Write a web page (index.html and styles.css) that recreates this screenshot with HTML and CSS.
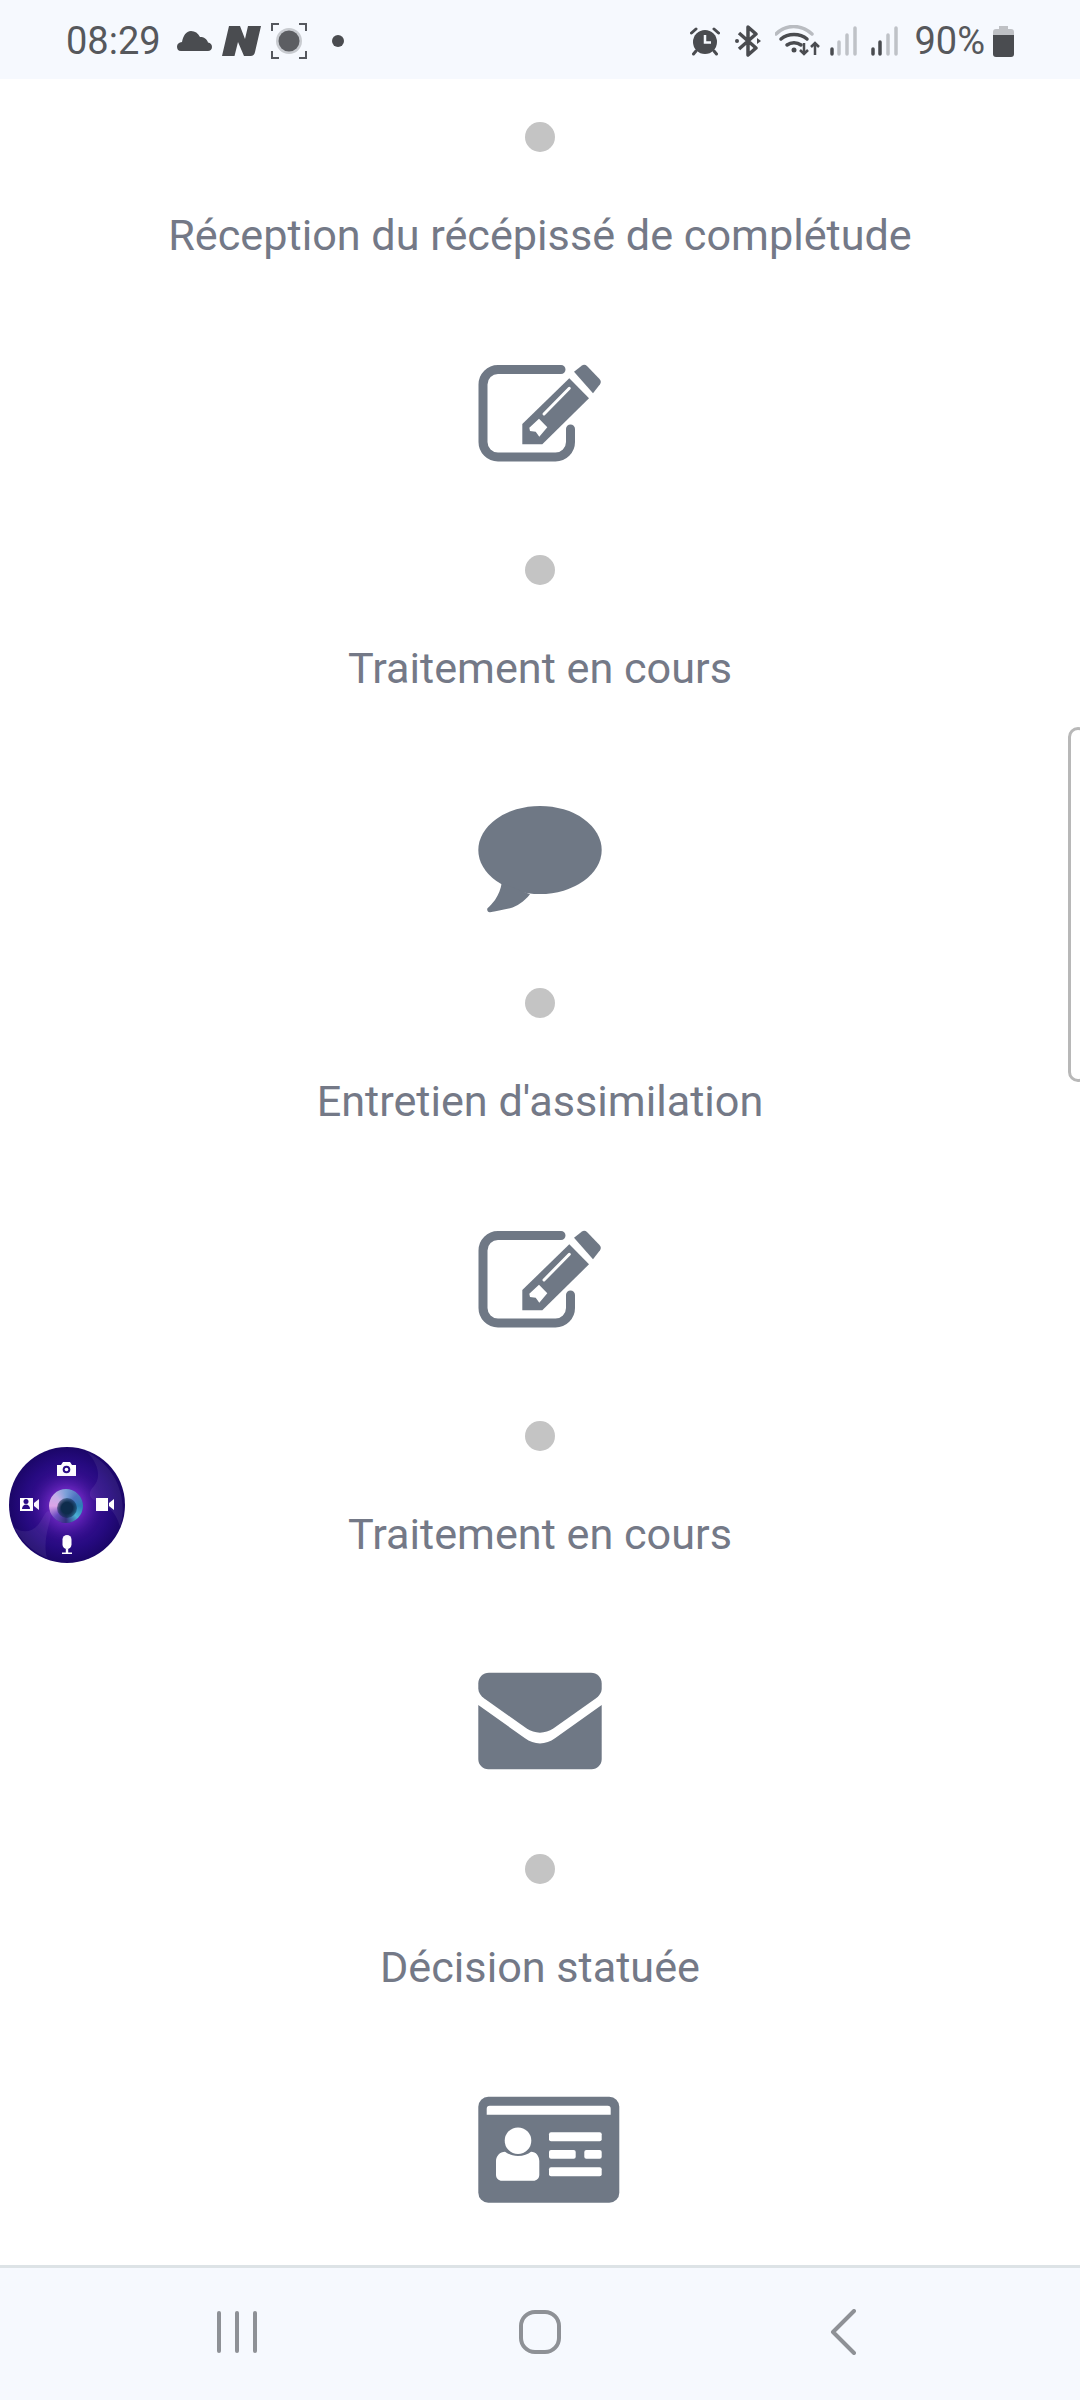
FILE: index.html
```html
<!DOCTYPE html>
<html lang="fr">
<head>
<meta charset="utf-8">
<title>Suivi du dossier</title>
<link rel="stylesheet" href="styles.css">
</head>
<body>
<div class="screen">
  <header class="status">
    <div class="status-group">
      <span class="clock">08:29</span>
      <svg class="gap16" width="35" height="24" viewBox="0 0 35 24"><path class="ink" d="M4 22C1 22 0 20 0 17.500 0 15 2 13.500 5 13 6 7 9 2 14 2c4 0 7 2 9 6 4 0 7 2 8 5.500 2.500.5 4 2 4 4.500s-2 4-4 4z"/></svg>
      <svg class="gap10" width="39" height="30" viewBox="0 0 39 30"><path class="ink" d="M7 0h11l5 13 3-13h13l-6 26c-.5 2.500-2 4-4.500 4H22l-6-14-3.500 14H0z"/></svg>
      <svg class="gap10" width="36" height="36" viewBox="0 0 36 36"><g class="frame"><path d="M1 8V1h7M28 1h7v7M1 28v7h7M35 28v7h-7"/></g><circle cx="18" cy="18" r="13" fill="#c8cbd0"/><circle cx="18" cy="18" r="10.500" fill="#5c5e62"/></svg>
      <svg class="gap25" width="12" height="12" viewBox="0 0 12 12"><circle class="ink" cx="6" cy="6" r="6"/></svg>
    </div>
    <div class="status-group">
      <svg width="30" height="30" viewBox="0 0 30 30"><circle class="ink" cx="15" cy="16" r="12"/><path class="hand" d="M15 9v7.500h6"/><path class="ear" d="M1.500 7 6 3M28.500 7 24 3M6 25l-2.500 3M24 25l2.500 3"/></svg>
      <svg class="gap15" width="26" height="32" viewBox="0 0 26 32"><path class="bt" d="M4 8l17 15-8 7V2l8 7L4 24"/><circle class="ink" cx="2" cy="16" r="2"/><path class="ink" d="M22 13l4 3-4 3z"/></svg>
      <svg class="gap14" width="45" height="32" viewBox="0 0 45 32"><path class="wifi-dim" d="M1 9C11-1 26-1 37 9"/><path class="wifi" d="M6 14c7-6 19-6 26 0M12 20c4-3 10-3 14 0"/><circle class="ink" cx="19" cy="25" r="2.500"/><path class="arrow" d="M29 18v11M25 25l4 4 4-4M40 30V18M36 22l4-4 4 4"/></svg>
      <svg class="gap10" width="28" height="30" viewBox="0 0 28 30"><path class="sig-dim" d="M9 28V16M17 28V9M25 28V2"/><path class="sig" d="M2 28v-5"/></svg>
      <svg class="gap13" width="28" height="30" viewBox="0 0 28 30"><path class="sig-dim" d="M17 28V9M25 28V2"/><path class="sig" d="M2 28v-5M9 28V16"/></svg>
      <span class="percent">90%</span>
      <svg class="gap8" width="21" height="31" viewBox="0 0 21 31"><path fill="#bfc1c5" d="M6 0h9v3h3a3 3 0 0 1 3 3v5H0V6a3 3 0 0 1 3-3h3z"/><path class="ink" d="M0 9h21v19a3 3 0 0 1-3 3H3a3 3 0 0 1-3-3z"/></svg>
    </div>
  </header>

  <main class="timeline">
    <section class="step">
      <div class="dot"></div>
      <p class="label">Réception du récépissé de complétude</p>
      <div class="icon-row">
        <svg class="icon" width="160" height="140" viewBox="0 0 160 140"><path class="box" d="M101 26.500H38a15 15 0 0 0-15 15V99a15 15 0 0 0 15 15h57.500a15 15 0 0 0 15-15V86"/><path class="fill" d="M109.300 35.300 129 55.300 82.300 101.300H62.300V81z"/><path class="fill" d="M114 28.700l8-6.200c1.500-1 3.500-.8 5 .5l12.500 13c1.500 1.700 1.700 3.500.5 5.200l-7 9.100z"/><path class="stripe" d="M84 71l25.300-25.700"/><path class="tip" d="M69.300 84.700 79 75.700l8.300 8.600-8 9.400-3.600-5-5.700-.7z"/></svg>
      </div>
    </section>
    <section class="step">
      <div class="dot"></div>
      <p class="label">Traitement en cours</p>
      <div class="icon-row">
        <svg class="icon" width="160" height="140" viewBox="0 0 160 140"><ellipse class="fill" cx="80" cy="74" rx="61.700" ry="44"/><path class="fill" d="M41.700 107c-1 6-3 11.500-6.700 17-2.500 3.300-5 5.800-7.500 8.300-1 1.800.5 4.300 2.500 4 8-1.500 13-2.500 20-4 7-2 14-6.500 20-14z"/></svg>
      </div>
    </section>
    <section class="step">
      <div class="dot"></div>
      <p class="label">Entretien d'assimilation</p>
      <div class="icon-row">
        <svg class="icon" width="160" height="140" viewBox="0 0 160 140"><path class="box" d="M101 26.500H38a15 15 0 0 0-15 15V99a15 15 0 0 0 15 15h57.500a15 15 0 0 0 15-15V86"/><path class="fill" d="M109.300 35.300 129 55.300 82.300 101.300H62.300V81z"/><path class="fill" d="M114 28.700l8-6.200c1.500-1 3.500-.8 5 .5l12.500 13c1.500 1.700 1.700 3.500.5 5.200l-7 9.100z"/><path class="stripe" d="M84 71l25.300-25.700"/><path class="tip" d="M69.300 84.700 79 75.700l8.300 8.600-8 9.400-3.600-5-5.700-.7z"/></svg>
      </div>
    </section>
    <section class="step">
      <div class="dot"></div>
      <p class="label">Traitement en cours</p>
      <div class="icon-row">
        <svg class="icon" width="160" height="140" viewBox="0 0 160 140"><path class="fill" d="M29 30.700h102c6 0 10.700 4.700 10.700 10.700v5c0 4-2.500 7.500-6 10L93.300 86.500c-8 5.500-18.700 5.500-26.600 0L24.300 56.400c-3.500-2.500-6-6-6-10v-5c0-6 4.700-10.700 10.700-10.700z"/><path class="fill" d="M18.300 63l46.700 33.300c9 6.800 21 6.800 30 0L141.700 63v54.300c0 5.500-4.500 10-10 10H28.300c-5.500 0-10-4.500-10-10z"/></svg>
      </div>
    </section>
    <section class="step">
      <div class="dot"></div>
      <p class="label">Décision statuée</p>
      <div class="icon-row">
        <svg class="icon" width="160" height="140" viewBox="0 0 160 140"><rect class="fill" x="18.300" y="21.700" width="141" height="106" rx="10"/><g class="card-ink"><path d="M26.700 33.700a3 3 0 0 1 3-3h118a3 3 0 0 1 3 3v6h-124z"/><circle cx="58" cy="65.700" r="13.300"/><path d="M45 76.700c3 2.300 7.500 4.300 13 4.300s10-2 13-4.300c5 0 8.300 4.300 8.300 9.300v13.700c0 3.500-2.500 6-6 6H42c-3.500 0-6-2.500-6-6V86c0-5 4-9.300 9-9.300z"/><rect x="89" y="57.300" width="52.700" height="9" rx="2"/><rect x="89" y="75" width="26.700" height="8.700" rx="2"/><rect x="124.300" y="75" width="17.400" height="8.700" rx="2"/><rect x="89" y="92.300" width="52.700" height="9" rx="2"/></g></svg>
      </div>
    </section>
  </main>

  <nav class="navbar">
    <div class="recents"><span class="bar"></span><span class="bar"></span><span class="bar"></span></div>
    <div class="home"></div>
    <svg width="26" height="46" viewBox="0 0 26 46"><path class="back" d="M24 2 3 23l21 21"/></svg>
  </nav>

  <div class="side-handle"></div>

  <div class="recorder">
    <svg class="recorder-art" width="120" height="120" viewBox="0 0 120 120">
      <defs>
        <radialGradient id="disc" cx="50%" cy="50%" r="50%"><stop offset="0" stop-color="#7a26cc"/><stop offset=".36" stop-color="#3f1398"/><stop offset=".75" stop-color="#260a80"/><stop offset="1" stop-color="#1b0668"/></radialGradient>
      </defs>
      <circle cx="60" cy="60" r="58" fill="url(#disc)"/>
      <path fill="#fff" fill-opacity=".07" d="M80 7c14 7 25 18 31 33 6 16 6 30 2 42-4-16-13-22-26-27-6-3-5-9 0-14 7-8 5-22-7-34zM40 113C26 107 14 96 7 82c7 6 17 6 24-2 5-6 7-14 11-14 3 0 2 6 0 13-3 11-5 23-2 34z"/>
      <g fill="#fff">
        <path d="M50 20h4l2-3h7l2 3h4v11H50z"/>
        <path d="M13 53h13v13H13zM27 58l5-4v11l-5-4z"/>
        <path d="M89 53h12v13H89zM102 58l5-4v11l-5-4z"/>
        <rect x="55.500" y="90" width="9" height="14" rx="4.500"/>
        <rect x="58.800" y="104" width="2.400" height="4"/>
        <rect x="55" y="107.500" width="10" height="1.500"/>
      </g>
      <circle cx="59.500" cy="24.500" r="3.800" fill="#2b0d86"/>
      <circle cx="59.500" cy="24.500" r="1.800" fill="#fff"/>
      <path fill="#2b0d86" d="M15 64c0-3 2-4.500 4-4.500s4 1.500 4 4.500z"/>
      <circle cx="19" cy="56.500" r="2.500" fill="#2b0d86"/>
    </svg>
    <div class="lens"><div class="lens-core"></div></div>
  </div>
</div>
</body>
</html>
```
FILE: styles.css
```css
* { box-sizing: border-box; }
html, body { margin: 0; padding: 0; background: #fff; }
.screen {
  position: relative;
  width: 1080px;
  height: 2400px;
  display: flex;
  flex-direction: column;
  overflow: hidden;
  font-family: Roboto, "Liberation Sans", sans-serif;
}
.status {
  height: 79px;
  flex: none;
  background: #f6f9fe;
  display: flex;
  justify-content: space-between;
  align-items: center;
  padding: 3px 66px 0 66px;
  color: #56585c;
  font-size: 38px;
  line-height: 44px;
}
.status-group { display: flex; align-items: center; }
.clock, .percent { display: block; }
.percent { margin-left: 15px; }
.gap8 { margin-left: 8px; }
.gap10 { margin-left: 10px; }
.gap13 { margin-left: 13px; }
.gap14 { margin-left: 14px; }
.gap15 { margin-left: 15px; }
.gap16 { margin-left: 16px; }
.gap25 { margin-left: 25px; }
.ink { fill: #4a4c50; }
.frame path { fill: none; stroke: #55585e; stroke-width: 2; }
.hand { fill: none; stroke: #f6f9fe; stroke-width: 2.500; }
.ear { fill: none; stroke: #4a4c50; stroke-width: 3; stroke-linecap: round; }
.bt { fill: none; stroke: #4a4c50; stroke-width: 3.500; stroke-linejoin: round; }
.wifi-dim { fill: none; stroke: #b9bcc1; stroke-width: 3.500; stroke-linecap: round; }
.wifi { fill: none; stroke: #4a4c50; stroke-width: 3.500; stroke-linecap: round; }
.arrow { fill: none; stroke: #4a4c50; stroke-width: 2.500; }
.sig-dim { fill: none; stroke: #bfc2c7; stroke-width: 3.500; stroke-linecap: round; }
.sig { fill: none; stroke: #4a4c50; stroke-width: 3.500; stroke-linecap: round; }

.timeline {
  flex: 1;
  min-height: 0;
  overflow: hidden;
  background: #fff;
  padding-top: 43px;
}
.step {
  height: 433px;
  display: flex;
  flex-direction: column;
  align-items: center;
}
.dot {
  width: 30px;
  height: 30px;
  flex: none;
  border-radius: 50%;
  background: #c4c4c4;
}
.label {
  margin: 60px 0 0;
  height: 48px;
  line-height: 48px;
  font-size: 43.200px;
  color: #747987;
  white-space: nowrap;
}
.icon-row {
  display: flex;
  justify-content: center;
  padding-top: 83px;
}
.icon { display: block; }
.fill { fill: #6f7885; }
.box { fill: none; stroke: #6f7885; stroke-width: 9; stroke-linecap: round; }
.stripe { fill: none; stroke: #fff; stroke-width: 3; stroke-linecap: round; }
.tip { fill: #fff; }
.card-ink { fill: #fff; }

.navbar {
  flex: none;
  height: 135px;
  background: #f6f9fe;
  border-top: 3px solid #dde3e6;
  display: grid;
  grid-template-columns: 1fr 1fr 1fr;
  align-items: center;
  justify-items: center;
  padding: 0 86px 4px;
}
.recents { display: flex; gap: 14px; }
.bar { display: block; width: 4px; height: 42px; border-radius: 2px; background: #8e9196; }
.home { width: 42px; height: 44px; border: 4px solid #8e9196; border-radius: 16px; }
.back { fill: none; stroke: #8e9196; stroke-width: 4; stroke-linecap: round; stroke-linejoin: round; }

.side-handle {
  position: absolute;
  right: -8px;
  top: 727px;
  width: 20px;
  height: 355px;
  border: 3px solid #b8b8b8;
  border-radius: 14px;
  background: #fff;
}
.recorder {
  position: absolute;
  left: 7px;
  top: 1445px;
  width: 120px;
  height: 120px;
}
.recorder-art { display: block; }
.lens {
  position: absolute;
  left: 42px;
  top: 44px;
  width: 34px;
  height: 34px;
  border-radius: 50%;
  background: conic-gradient(#7aa0d8, #4f74c0, #2c7fb5, #4bb0d4, #33307f, #6a4cc0, #dca4e8, #c4aee8, #7aa0d8);
  box-shadow: 0 0 14px 6px rgba(150, 60, 230, .45);
}
.lens-core {
  width: 20px;
  height: 20px;
  margin: 9px 0 0 8px;
  border-radius: 50%;
  background: radial-gradient(#0e2c4c 40%, rgba(14, 44, 76, 0) 100%);
}
```
